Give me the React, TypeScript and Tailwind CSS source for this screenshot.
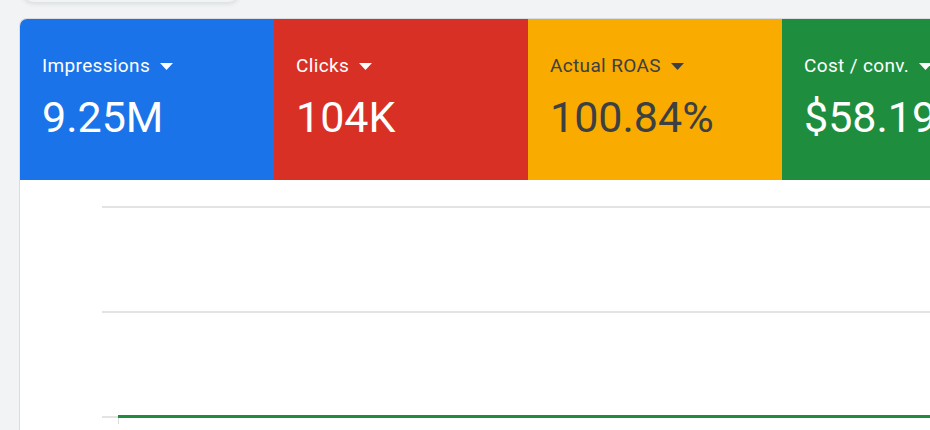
const tiles = [
  { label: "Impressions", value: "9.25M", bg: "bg-[#1a73e8]", fg: "text-white" },
  { label: "Clicks", value: "104K", bg: "bg-[#d93025]", fg: "text-white" },
  { label: "Actual ROAS", value: "100.84%", bg: "bg-[#f9ab00]", fg: "text-[#3c4043]" },
  { label: "Cost / conv.", value: "$58.19", bg: "bg-[#1e8e3e]", fg: "text-white" },
];

function Caret() {
  return (
    <svg width="14" height="7" viewBox="0 0 14 7" className="ml-[10px] shrink-0" aria-hidden>
      <path d="M0 0h13L6.5 7z" fill="currentColor" />
    </svg>
  );
}

export default function App() {
  return (
    <div className="h-[430px] w-[930px] overflow-hidden bg-[#f1f3f4] font-['Roboto',sans-serif]">
      <div className="relative">
        <div className="absolute left-[22px] top-[-10px] h-[12px] w-[218px] rounded-b-xl bg-[#f1f3f4] shadow-[0_2px_4px_rgba(60,64,67,0.12)]" />
      </div>
      <div className="pl-[19px] pt-[18px]">
        <div className="h-[420px] w-[1100px] overflow-hidden rounded-tl-[8px] border-l border-t border-[#dadce0] bg-white">
          <div className="flex">
            {tiles.map((t) => (
              <div key={t.label} className={`h-[161px] w-[254px] shrink-0 px-[22px] pt-[35px] ${t.bg} ${t.fg}`}>
                <div className="flex items-center text-[19px] leading-[24px] tracking-[0.35px]">
                  <span>{t.label}</span>
                  <Caret />
                </div>
                <div className="mt-[14px] text-[43px] leading-[50px] tracking-[0px]">{t.value}</div>
              </div>
            ))}
          </div>
          <div className="pl-[82px] pt-[26px]">
            <div className="h-[2px] bg-[#e3e3e3]" />
            <div className="h-[103px]" />
            <div className="h-[2px] bg-[#e3e3e3]" />
            <div className="h-[102px]" />
            <div className="flex items-start">
              <div className="mt-[1px] h-[2px] w-[16px] bg-[#e3e3e3]" />
              <div className="flex-1">
                <div className="h-[3px] bg-[#1e8e3e]" />
                <div className="h-[6px] w-px bg-[#dadce0]" />
              </div>
            </div>
          </div>
        </div>
      </div>
    </div>
  );
}
